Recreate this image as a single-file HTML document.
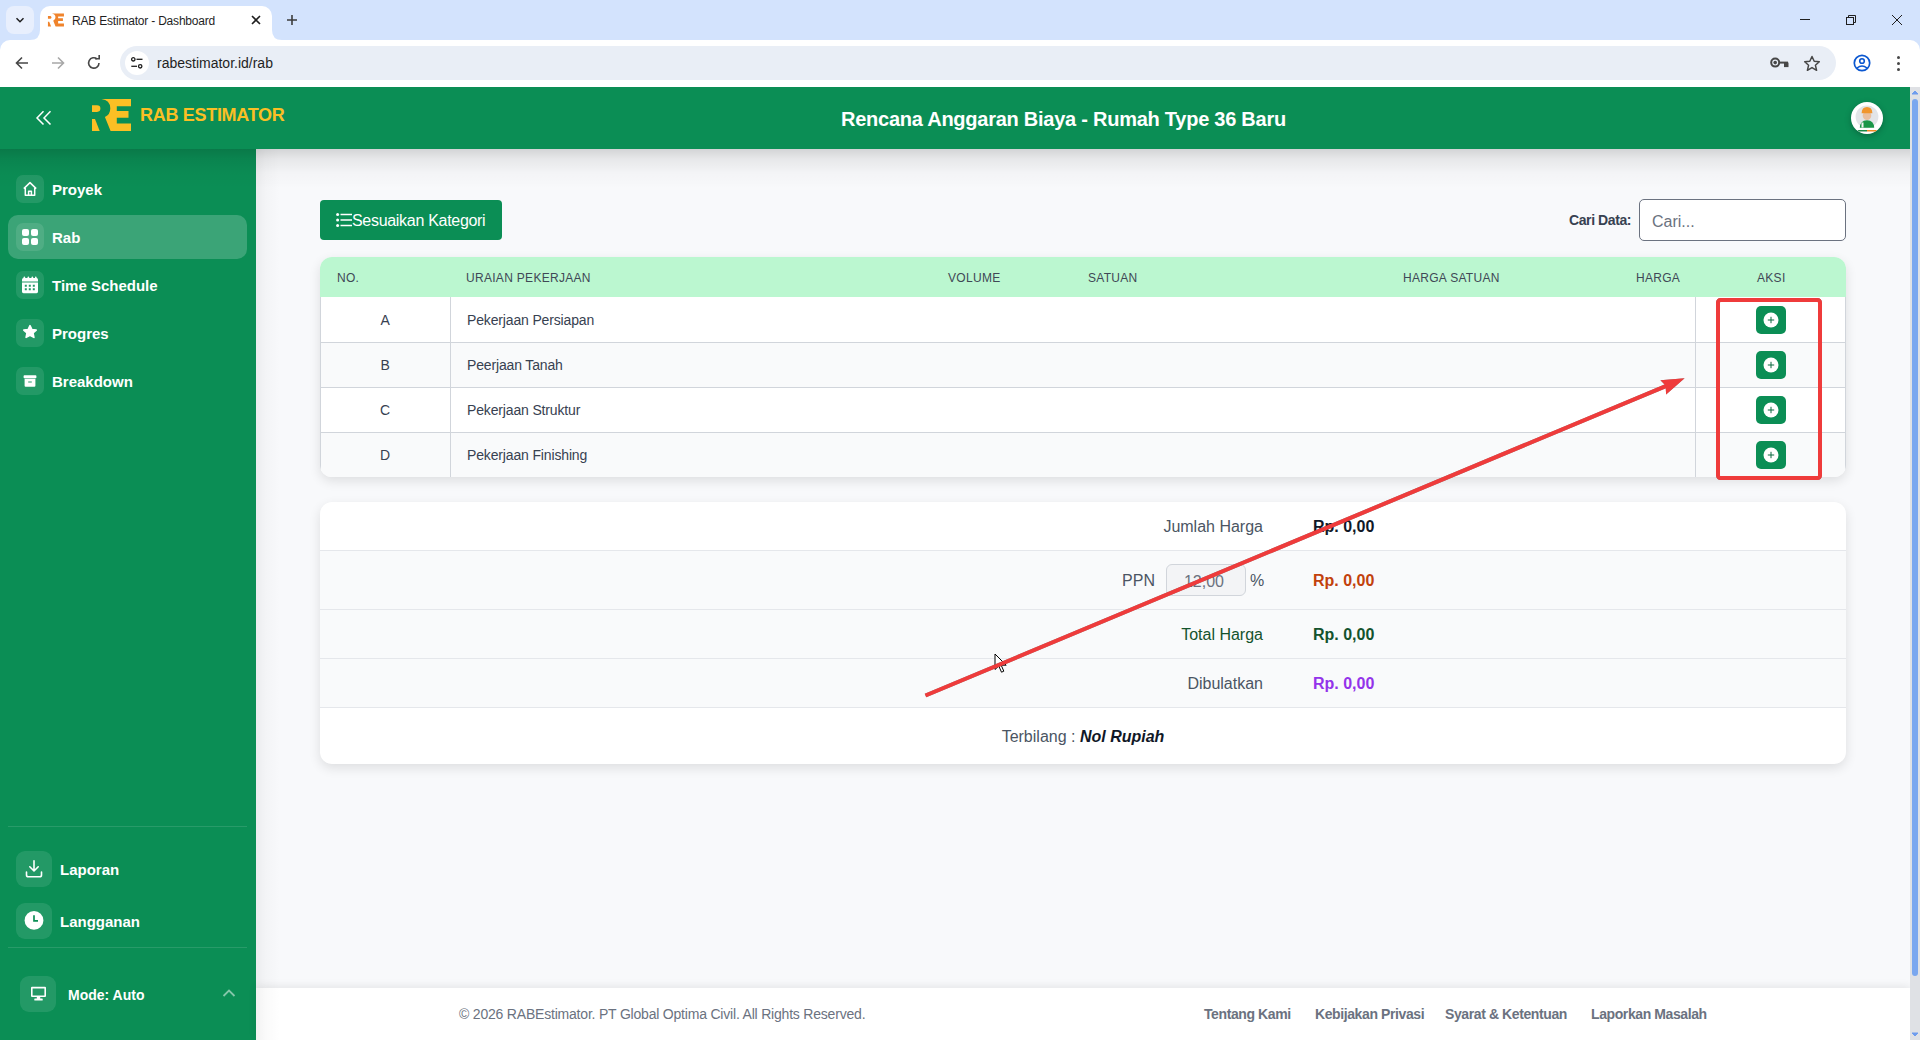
<!DOCTYPE html>
<html><head><meta charset="utf-8">
<style>
*{box-sizing:border-box;margin:0;padding:0}
html,body{width:1920px;height:1040px;overflow:hidden;background:#f8f9fb;font-family:"Liberation Sans",sans-serif}
.a{position:absolute}
.t{position:absolute;white-space:nowrap}
/* browser chrome */
#tabstrip{left:0;top:0;width:1920px;height:60px;background:#d3e3fd}
#toolbar{left:0;top:40px;width:1920px;height:47px;background:#fff;border-radius:10px 10px 0 0}
/* app */
#hdr{left:0;top:87px;width:1910px;height:62px;background:#0b8e55}
#side{left:0;top:149px;width:256px;height:891px;background:#0b8e55}
#main{left:256px;top:149px;width:1654px;height:839px;background:#f8f9fb}
#footer{left:256px;top:988px;width:1654px;height:52px;background:#fff;box-shadow:0 -2px 8px rgba(0,0,0,0.08)}
#sb{left:1910px;top:87px;width:10px;height:953px;background:#dfe1e5}
.ib{left:16px;width:28px;height:28px;border-radius:7px;background:rgba(255,255,255,0.1)}
.ib2{width:36px;height:36px;border-radius:9px;background:rgba(255,255,255,0.1)}
.nv{left:52px;font-size:15px;line-height:15px;font-weight:700;color:#fff}
.th{top:272px;font-size:12px;line-height:12px;color:#3f4856;letter-spacing:0.3px}
.td{font-size:14px;line-height:14px;color:#374151;margin-top:5px;letter-spacing:-0.15px}
.addb{left:1756px;width:30px;height:28px;border-radius:5px;background:#0b8e55}
.sl{font-size:16px;line-height:16px;color:#4b5563;text-align:right;margin-top:1px}
.sv{font-size:16px;line-height:16px;font-weight:700;margin-top:1px}
.pl{left:1763px}
.fl{top:1007px;font-size:14px;line-height:14px;font-weight:700;color:#6b7280;letter-spacing:-0.4px}
</style></head>
<body>
<!-- ============ BROWSER CHROME ============ -->
<div id="tabstrip" class="a"></div>
<div class="a" style="left:6px;top:6px;width:28px;height:28px;border-radius:8px;background:#e8effd"></div>
<svg class="a" style="left:14px;top:14px" width="12" height="12" viewBox="0 0 12 12"><path d="M2.5 4.2 L6 7.7 L9.5 4.2" fill="none" stroke="#1f1f1f" stroke-width="1.5"/></svg>
<!-- active tab -->
<div class="a" style="left:40px;top:6px;width:232px;height:40px;background:#fff;border-radius:10px 10px 0 0"></div>
<svg class="a" style="left:30px;top:30px" width="10" height="10" viewBox="0 0 10 10"><path d="M0 10 Q10 10 10 0 L10 10 Z" fill="#fff"/></svg>
<svg class="a" style="left:272px;top:30px" width="10" height="10" viewBox="0 0 10 10"><path d="M10 10 Q0 10 0 0 L0 10 Z" fill="#fff"/></svg>
<!-- favicon -->
<svg class="a" style="left:0;top:0" width="80" height="40" viewBox="0 0 80 40"><g transform="translate(45.5 11.4) scale(0.41)" fill="#f0832b"><path d="M15.4 5 L45 5 L45 12.3 L30.8 12.3 L30.8 16.9 L42.5 16.9 L42.5 23.7 L30.8 23.7 L30.8 29.6 L45 29.6 L45 36.9 L24.6 36.9 L18.9 23.1 Q24.3 20.5 24.3 14.2 Q24 6 15.4 5 Z"/><path d="M6 11.3 L11 11.3 Q14.4 11.3 14.4 14.6 Q14.4 17.9 11 17.9 L6 17.9 Z"/><path d="M6 25 L9 25 L13.7 36.9 L6 36.9 Z"/></g></svg>
<div class="t" style="left:72px;top:14px;font-size:12px;line-height:14px;color:#1f1f1f;letter-spacing:-0.2px">RAB Estimator - Dashboard</div>
<svg class="a" style="left:251px;top:15px" width="10" height="10" viewBox="0 0 10 10"><path d="M1 1 L9 9 M9 1 L1 9" stroke="#1f1f1f" stroke-width="1.6"/></svg>
<svg class="a" style="left:286px;top:14px" width="12" height="12" viewBox="0 0 12 12"><path d="M6 1 V11 M1 6 H11" stroke="#3c3c3c" stroke-width="1.6"/></svg>
<!-- window controls -->
<div class="a" style="left:1800px;top:19px;width:10px;height:1px;background:#1f1f1f"></div>
<svg class="a" style="left:1845px;top:14px" width="12" height="12" viewBox="0 0 12 12"><rect x="1.5" y="3.5" width="7" height="7" fill="none" stroke="#1f1f1f" stroke-width="1"/><path d="M3.5 3.5 V1.5 H10.5 V8.5 H8.5" fill="none" stroke="#1f1f1f" stroke-width="1"/></svg>
<svg class="a" style="left:1891px;top:14px" width="12" height="12" viewBox="0 0 12 12"><path d="M1 1 L11 11 M11 1 L1 11" stroke="#1f1f1f" stroke-width="1"/></svg>
<!-- toolbar -->
<div id="toolbar" class="a"></div>
<!-- nav icons -->
<svg class="a" style="left:14px;top:55px" width="16" height="16" viewBox="0 0 16 16"><path d="M14 8 H3 M8 2.5 L2.5 8 L8 13.5" fill="none" stroke="#474747" stroke-width="1.6"/></svg>
<svg class="a" style="left:50px;top:55px" width="16" height="16" viewBox="0 0 16 16"><path d="M2 8 H13 M8 2.5 L13.5 8 L8 13.5" fill="none" stroke="#a8a8a8" stroke-width="1.6"/></svg>
<svg class="a" style="left:86px;top:55px" width="16" height="16" viewBox="0 0 16 16"><path d="M13 8 A5.2 5.2 0 1 1 11.2 4" fill="none" stroke="#474747" stroke-width="1.6"/><path d="M9 3.8 H13.2 V-0.2" fill="none" stroke="#474747" stroke-width="1.6"/></svg>
<!-- omnibox -->
<div class="a" style="left:120px;top:46px;width:1716px;height:34px;border-radius:17px;background:#e9eef6"></div>
<div class="a" style="left:125px;top:51px;width:24px;height:24px;border-radius:12px;background:#fff"></div>
<svg class="a" style="left:129px;top:55px" width="16" height="16" viewBox="0 0 16 16"><circle cx="4.3" cy="4.3" r="1.7" fill="none" stroke="#1f1f1f" stroke-width="1.3"/><path d="M7.5 4.3 H13.5" stroke="#1f1f1f" stroke-width="1.3"/><circle cx="11.2" cy="11.3" r="1.7" fill="none" stroke="#1f1f1f" stroke-width="1.3"/><path d="M2.3 11.3 H8" stroke="#1f1f1f" stroke-width="1.3"/></svg>
<div class="t" style="left:157px;top:55px;font-size:14px;line-height:16px;color:#1f1f1f">rabestimator.id/rab</div>
<!-- key -->
<svg class="a" style="left:1770px;top:57px" width="20" height="12" viewBox="0 0 20 12"><circle cx="5.2" cy="5.6" r="4" fill="none" stroke="#474747" stroke-width="2"/><circle cx="5.2" cy="5.6" r="1.8" fill="#474747"/><path d="M9 5.6 H18" stroke="#474747" stroke-width="2"/><rect x="14" y="5.6" width="4.5" height="4.5" fill="#474747"/></svg>
<!-- star -->
<svg class="a" style="left:1803px;top:55px" width="18" height="17" viewBox="0 0 18 17"><path d="M9 1.5 L11.2 6.3 L16.3 6.8 L12.4 10.2 L13.6 15.3 L9 12.6 L4.4 15.3 L5.6 10.2 L1.7 6.8 L6.8 6.3 Z" fill="none" stroke="#474747" stroke-width="1.5" stroke-linejoin="round"/></svg>
<!-- profile -->
<svg class="a" style="left:1853px;top:54px" width="18" height="18" viewBox="0 0 18 18"><circle cx="9" cy="9" r="7.7" fill="none" stroke="#0b57d0" stroke-width="1.7"/><circle cx="9" cy="7" r="2.3" fill="none" stroke="#0b57d0" stroke-width="1.6"/><path d="M4 14 Q9 10 14 14" fill="none" stroke="#0b57d0" stroke-width="1.6"/></svg>
<!-- kebab -->
<div class="a" style="left:1896.5px;top:56px;width:3px;height:3px;border-radius:2px;background:#474747"></div>
<div class="a" style="left:1896.5px;top:62px;width:3px;height:3px;border-radius:2px;background:#474747"></div>
<div class="a" style="left:1896.5px;top:68px;width:3px;height:3px;border-radius:2px;background:#474747"></div>

<!-- ============ APP ============ -->
<div id="main" class="a"></div>
<!-- sidebar -->
<div id="side" class="a"></div>
<div class="a" style="left:8px;top:215px;width:239px;height:44px;border-radius:10px;background:rgba(255,255,255,0.2)"></div>
<div class="a ib" style="top:175px"></div>
<div class="a ib" style="top:223px"></div>
<div class="a ib" style="top:271px"></div>
<div class="a ib" style="top:319px"></div>
<div class="a ib" style="top:367px"></div>
<div class="t nv" style="top:182px">Proyek</div>
<div class="t nv" style="top:230px">Rab</div>
<div class="t nv" style="top:278px">Time Schedule</div>
<div class="t nv" style="top:326px">Progres</div>
<div class="t nv" style="top:374px">Breakdown</div>
<!-- icons -->
<svg class="a" style="left:22px;top:181px" width="16" height="16" viewBox="0 0 16 16"><path d="M1.8 7.6 L8 1.6 L14.2 7.6 M3.3 6.3 V14.3 H12.7 V6.3 M6.6 14.3 V10.3 H9.4 V14.3" fill="none" stroke="#fff" stroke-width="1.5" stroke-linejoin="round"/></svg>
<svg class="a" style="left:22px;top:229px" width="16" height="16" viewBox="0 0 16 16"><rect x="0" y="0" width="7" height="7" rx="2" fill="#fff"/><rect x="9" y="0" width="7" height="7" rx="2" fill="#fff"/><rect x="0" y="9" width="7" height="7" rx="2" fill="#fff"/><rect x="9" y="9" width="7" height="7" rx="2" fill="#fff"/></svg>
<svg class="a" style="left:22px;top:276px" width="16" height="18" viewBox="0 0 16 18"><rect x="1.6" y="0.6" width="1.5" height="2.4" rx="0.7" fill="#fff"/><rect x="5.6" y="0.6" width="1.5" height="2.4" rx="0.7" fill="#fff"/><rect x="9.6" y="0.6" width="1.5" height="2.4" rx="0.7" fill="#fff"/><rect x="13" y="0.6" width="1.5" height="2.4" rx="0.7" fill="#fff"/><path d="M0 3.5 Q0 2 1.5 2 H14.5 Q16 2 16 3.5 V5.5 H0 Z" fill="#fff"/><path d="M0 6.6 H16 V15.8 Q16 17.2 14.5 17.2 H1.5 Q0 17.2 0 15.8 Z M2.8 8.8 V10.8 H4.8 V8.8 Z M6.8 8.8 V10.8 H8.8 V8.8 Z M10.8 8.8 V10.8 H12.8 V8.8 Z M2.8 12.2 V14.2 H4.8 V12.2 Z M6.8 12.2 V14.2 H8.8 V12.2 Z M10.8 12.2 V14.2 H12.8 V12.2 Z" fill="#fff" fill-rule="evenodd"/></svg>
<svg class="a" style="left:22px;top:324px" width="16" height="16" viewBox="0 0 16 16"><path d="M8 1.6 L9.9 5.6 L14.2 6.1 L11 9 L11.9 13.4 L8 11.2 L4.1 13.4 L5 9 L1.8 6.1 L6.1 5.6 Z" fill="#fff" stroke="#fff" stroke-width="1.6" stroke-linejoin="round"/></svg>
<svg class="a" style="left:22px;top:373px" width="16" height="16" viewBox="0 0 16 16"><rect x="1.6" y="2.2" width="12.8" height="3" rx="0.8" fill="#fff"/><path d="M2.6 5.8 H13.4 V12.8 Q13.4 13.8 12.4 13.8 H3.6 Q2.6 13.8 2.6 12.8 Z M6.2 8.4 V9.6 H9.8 V8.4 Z" fill="#fff" fill-rule="evenodd"/></svg>
<!-- bottom sidebar -->
<div class="a" style="left:8px;top:826px;width:239px;height:1px;background:rgba(255,255,255,0.12)"></div>
<div class="a" style="left:8px;top:947px;width:239px;height:1px;background:rgba(255,255,255,0.12)"></div>
<div class="a ib2" style="left:16px;top:851px"></div>
<div class="a ib2" style="left:16px;top:903px"></div>
<div class="a ib2" style="left:20px;top:976px"></div>
<div class="t nv" style="left:60px;top:862px">Laporan</div>
<div class="t nv" style="left:60px;top:914px">Langganan</div>
<div class="t" style="left:68px;top:988px;font-size:14px;line-height:14px;font-weight:700;color:#fff">Mode: Auto</div>
<svg class="a" style="left:25px;top:860px" width="18" height="18" viewBox="0 0 18 18"><path d="M9 0.8 V10.8 M4.8 6.8 L9 11 L13.2 6.8 M1.5 12 V15 Q1.5 16.8 3.3 16.8 H14.7 Q16.5 16.8 16.5 15 V12" fill="none" stroke="#fff" stroke-width="1.6" stroke-linecap="round" stroke-linejoin="round"/></svg>
<svg class="a" style="left:24px;top:910px" width="20" height="20" viewBox="0 0 20 20"><circle cx="10" cy="10.4" r="9.4" fill="#fff"/><path d="M10 5.2 V10.8 H14" fill="none" stroke="#0b8e55" stroke-width="1.7"/></svg>
<svg class="a" style="left:30px;top:986px" width="17" height="15" viewBox="0 0 17 15"><path d="M1 1.8 Q1 0.8 2 0.8 H15 Q16 0.8 16 1.8 V10 Q16 11 15 11 H2 Q1 11 1 10 Z M2.6 2.4 V9.4 H14.4 V2.4 Z" fill="#fff" fill-rule="evenodd"/><rect x="6.8" y="11" width="3.4" height="2" fill="#fff"/><rect x="4.3" y="12.6" width="8.4" height="1.8" rx="0.5" fill="#fff"/></svg>
<svg class="a" style="left:222px;top:988px" width="14" height="10" viewBox="0 0 14 10"><path d="M1.5 8 L7 2.5 L12.5 8" fill="none" stroke="rgba(255,255,255,0.5)" stroke-width="1.8"/></svg>

<!-- header -->
<div class="a" style="left:0;top:149px;width:1910px;height:40px;background:linear-gradient(rgba(0,0,0,0.15),rgba(0,0,0,0.07) 25%,rgba(0,0,0,0.02) 60%,rgba(0,0,0,0))"></div>
<div id="hdr" class="a"></div>
<svg class="a" style="left:34px;top:109px" width="19" height="18" viewBox="0 0 19 18"><path d="M9.5 2.2 L3 8.9 L9.5 15.6 M16.5 2.2 L10 8.9 L16.5 15.6" fill="none" stroke="#fff" stroke-width="1.5"/></svg>
<svg class="a" style="left:86px;top:94px" width="50" height="40" viewBox="0 0 50 40"><path d="M15.4 5 L45 5 L45 12.3 L30.8 12.3 L30.8 16.9 L42.5 16.9 L42.5 23.7 L30.8 23.7 L30.8 29.6 L45 29.6 L45 36.9 L24.6 36.9 L18.9 23.1 Q24.3 20.5 24.3 14.2 Q24 6 15.4 5 Z" fill="#fbbf24"/><path d="M6 11.3 L11 11.3 Q14.4 11.3 14.4 14.6 Q14.4 17.9 11 17.9 L6 17.9 Z" fill="#fbbf24"/><path d="M6 25 L9 25 L13.7 36.9 L6 36.9 Z" fill="#fbbf24"/></svg>
<div class="t" style="left:140px;top:106px;font-size:18px;line-height:18px;font-weight:700;color:#fbbf24;letter-spacing:-0.3px">RAB ESTIMATOR</div>
<div class="t" style="left:841px;top:109px;font-size:20px;line-height:20px;font-weight:700;color:#fff;letter-spacing:-0.25px">Rencana Anggaran Biaya - Rumah Type 36 Baru</div>
<!-- avatar -->
<div class="a" style="left:1851px;top:102px;width:32px;height:32px;border-radius:16px;background:#fff;box-shadow:0 2px 6px rgba(0,0,0,0.25)"></div>
<svg class="a" style="left:1851px;top:102px" width="32" height="32" viewBox="0 0 32 32">
<circle cx="16" cy="14.8" r="11.4" fill="#e2e5e8"/>
<path d="M8.8 25.8 Q9 18.6 16 18.2 Q23 18.6 23.2 25.8 Z" fill="#1a9648"/>
<rect x="10.5" y="20.5" width="2" height="5" fill="#f2f2f2"/>
<ellipse cx="16" cy="13.8" rx="4.3" ry="4.2" fill="#e9bf9f"/>
<path d="M10.6 11.2 Q10.8 5.2 16 5.1 Q21.2 5.2 21.4 11.2 Z" fill="#f0962e"/>
<path d="M6.5 28 H16 V29.6 H8 Z" fill="#1b8a44"/><path d="M16 28 H26 L24.5 29.6 H16 Z" fill="#f08a24"/>
</svg>
<!-- ============ CONTENT ============ -->
<div class="a" style="left:320px;top:200px;width:182px;height:40px;border-radius:4px;background:#0b8e55"></div>
<svg class="a" style="left:336px;top:213px" width="16" height="14" viewBox="0 0 16 14"><circle cx="1.6" cy="1.6" r="1.5" fill="#fff"/><circle cx="1.6" cy="7" r="1.5" fill="#fff"/><circle cx="1.6" cy="12.4" r="1.5" fill="#fff"/><path d="M4.5 1.6 H16 M4.5 7 H16 M4.5 12.4 H16" stroke="#fff" stroke-width="1.5"/></svg>
<div class="t" style="left:352px;top:213px;font-size:16px;line-height:16px;color:#fff;letter-spacing:-0.3px">Sesuaikan Kategori</div>
<div class="t" style="left:1569px;top:213px;font-size:14px;line-height:14px;font-weight:700;color:#374151;letter-spacing:-0.4px">Cari Data:</div>
<div class="a" style="left:1639px;top:199px;width:207px;height:42px;border-radius:5px;background:#fff;border:1px solid #6b7280"></div>
<div class="t" style="left:1652px;top:214px;font-size:16px;line-height:16px;color:#6b7280">Cari...</div>
<!-- table -->
<div class="a" style="left:320px;top:257px;width:1526px;height:220px;border-radius:12px;background:#fff;box-shadow:0 4px 12px rgba(0,0,0,0.11);overflow:hidden">
  <div class="a" style="left:0;top:0;width:1526px;height:40px;background:#bbf7d0"></div>
  <div class="a" style="left:0;top:85px;width:1526px;height:45px;background:#f9fafb"></div>
  <div class="a" style="left:0;top:175px;width:1526px;height:45px;background:#f9fafb"></div>
  <div class="a" style="left:0;top:40px;width:1px;height:180px;background:#d1d5db"></div>
  <div class="a" style="left:1525px;top:40px;width:1px;height:180px;background:#d1d5db"></div>
  <div class="a" style="left:130px;top:40px;width:1px;height:180px;background:#d1d5db"></div>
  <div class="a" style="left:1375px;top:40px;width:1px;height:180px;background:#d1d5db"></div>
  <div class="a" style="left:0;top:85px;width:1526px;height:1px;background:#d1d5db"></div>
  <div class="a" style="left:0;top:130px;width:1526px;height:1px;background:#d1d5db"></div>
  <div class="a" style="left:0;top:175px;width:1526px;height:1px;background:#d1d5db"></div>
</div>
<div class="t th" style="left:337px">NO.</div>
<div class="t th" style="left:466px">URAIAN PEKERJAAN</div>
<div class="t th" style="left:948px">VOLUME</div>
<div class="t th" style="left:1088px">SATUAN</div>
<div class="t th" style="left:1403px">HARGA SATUAN</div>
<div class="t th" style="left:1636px">HARGA</div>
<div class="t th" style="left:1757px">AKSI</div>
<div class="t td" style="left:378px;width:14px;text-align:center;top:308px">A</div>
<div class="t td" style="left:467px;top:308px">Pekerjaan Persiapan</div>
<div class="t td" style="left:378px;width:14px;text-align:center;top:353px">B</div>
<div class="t td" style="left:467px;top:353px">Peerjaan Tanah</div>
<div class="t td" style="left:378px;width:14px;text-align:center;top:398px">C</div>
<div class="t td" style="left:467px;top:398px">Pekerjaan Struktur</div>
<div class="t td" style="left:378px;width:14px;text-align:center;top:443px">D</div>
<div class="t td" style="left:467px;top:443px">Pekerjaan Finishing</div>
<div class="a addb" style="top:306px"></div>
<div class="a addb" style="top:351px"></div>
<div class="a addb" style="top:396px"></div>
<div class="a addb" style="top:441px"></div>
<!-- summary card -->
<div class="a" style="left:320px;top:502px;width:1526px;height:262px;border-radius:12px;background:#fff;box-shadow:0 4px 12px rgba(0,0,0,0.11);overflow:hidden">
  <div class="a" style="left:0;top:48px;width:1526px;height:157px;background:#f9fafb"></div>
  <div class="a" style="left:0;top:48px;width:1526px;height:1px;background:#e5e7eb"></div>
  <div class="a" style="left:0;top:107px;width:1526px;height:1px;background:#e5e7eb"></div>
  <div class="a" style="left:0;top:156px;width:1526px;height:1px;background:#e5e7eb"></div>
  <div class="a" style="left:0;top:205px;width:1526px;height:1px;background:#e5e7eb"></div>
</div>
<div class="t sl" style="left:1063px;width:200px;top:518px">Jumlah Harga</div>
<div class="t sv" style="left:1313px;top:518px;color:#111827">Rp. 0,00</div>
<div class="t sl" style="left:1055px;width:100px;top:572px">PPN</div>
<div class="a" style="left:1166px;top:564px;width:80px;height:32px;border-radius:6px;background:#f3f4f6;border:1px solid #d1d5db"></div>
<div class="t" style="left:1164px;width:80px;text-align:center;top:574px;font-size:16px;line-height:16px;color:#6b7280">12,00</div>
<div class="t sl" style="left:1250px;top:572px">%</div>
<div class="t sv" style="left:1313px;top:572px;color:#c2410c">Rp. 0,00</div>
<div class="t sl" style="left:1063px;width:200px;top:626px;color:#14532d">Total Harga</div>
<div class="t sv" style="left:1313px;top:626px;color:#14532d">Rp. 0,00</div>
<div class="t sl" style="left:1063px;width:200px;top:675px">Dibulatkan</div>
<div class="t sv" style="left:1313px;top:675px;color:#9333ea">Rp. 0,00</div>
<div class="t" style="left:320px;width:1526px;text-align:center;top:729px;font-size:16px;line-height:16px;color:#4b5563">Terbilang : <span style="font-style:italic;font-weight:700;color:#111827">Nol Rupiah</span></div>

<!-- plus icons -->
<svg class="a pl" style="top:312px" width="16" height="16" viewBox="0 0 16 16"><circle cx="8" cy="8" r="7.5" fill="#fff"/><path d="M8 4.8 V11.2 M4.8 8 H11.2" stroke="#0c6b40" stroke-width="1"/></svg>
<svg class="a pl" style="top:357px" width="16" height="16" viewBox="0 0 16 16"><circle cx="8" cy="8" r="7.5" fill="#fff"/><path d="M8 4.8 V11.2 M4.8 8 H11.2" stroke="#0c6b40" stroke-width="1"/></svg>
<svg class="a pl" style="top:402px" width="16" height="16" viewBox="0 0 16 16"><circle cx="8" cy="8" r="7.5" fill="#fff"/><path d="M8 4.8 V11.2 M4.8 8 H11.2" stroke="#0c6b40" stroke-width="1"/></svg>
<svg class="a pl" style="top:447px" width="16" height="16" viewBox="0 0 16 16"><circle cx="8" cy="8" r="7.5" fill="#fff"/><path d="M8 4.8 V11.2 M4.8 8 H11.2" stroke="#0c6b40" stroke-width="1"/></svg>
<!-- footer -->
<div id="footer" class="a"></div>
<div class="t" style="left:459px;top:1007px;font-size:14px;line-height:14px;color:#6b7280;letter-spacing:-0.2px">© 2026 RABEstimator. PT Global Optima Civil. All Rights Reserved.</div>
<div class="t fl" style="left:1204px">Tentang Kami</div>
<div class="t fl" style="left:1315px">Kebijakan Privasi</div>
<div class="t fl" style="left:1445px">Syarat &amp; Ketentuan</div>
<div class="t fl" style="left:1591px">Laporkan Masalah</div>
<div class="a" style="left:256px;top:149px;width:24px;height:891px;background:linear-gradient(90deg,rgba(0,0,0,0.05),rgba(0,0,0,0.02) 40%,rgba(0,0,0,0))"></div>
<!-- scrollbar -->
<div id="sb" class="a"></div>
<svg class="a" style="left:1910px;top:87px" width="10" height="953" viewBox="0 0 10 953">
<path d="M2 7 L5 4 L8 7 Z" fill="#6e9cee" stroke="#6e9cee" stroke-width="1" stroke-linejoin="round"/>
<rect x="2" y="12" width="6" height="877" rx="3" fill="#7aa7ef"/>
<path d="M2 946 L5 949 L8 946 Z" fill="#6e9cee" stroke="#6e9cee" stroke-width="1" stroke-linejoin="round"/>
</svg>
<!-- cursor -->
<svg class="a" style="left:994px;top:653px" width="14" height="21" viewBox="0 0 14 21"><path d="M1 1 L1 16.5 L4.8 13 L7.5 19.2 L9.8 18.2 L7.2 12.2 L12.2 12.2 Z" fill="#fff" stroke="#000" stroke-width="1" stroke-linejoin="round"/></svg>
<!-- annotations -->
<svg class="a" style="left:0;top:0;filter:drop-shadow(0.5px 0.8px 0.4px rgba(0,0,0,0.45))" width="1920" height="1040" viewBox="0 0 1920 1040">
<rect x="1718" y="300" width="102" height="178" rx="2.5" fill="none" stroke="#ef3b3b" stroke-width="4"/>
<path d="M925.5 695.5 L1667 385.6" stroke="#ef3b3b" stroke-width="4" stroke-linecap="butt"/>
<path d="M1684.6 378.3 L1660.4 380.2 L1665.6 385.5 L1666.1 394.6 Z" fill="#ef3b3b"/>
</svg>


</body></html>
